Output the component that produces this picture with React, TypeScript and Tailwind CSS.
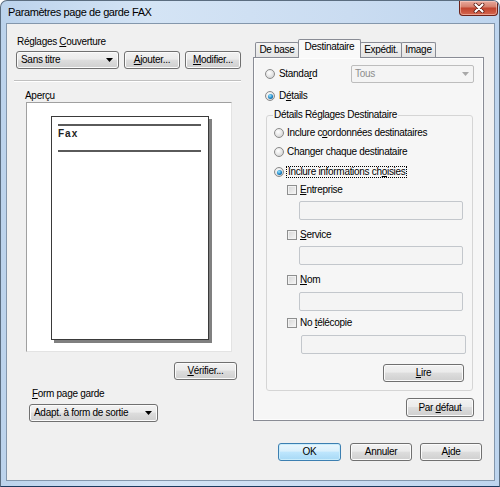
import React from "react";

const BTN =
  "flex items-center justify-center rounded-[3px] border border-[#707070] bg-[linear-gradient(#f2f2f2,#ebebeb_45%,#dddddd_50%,#cfcfcf)] shadow-[inset_0_0_0_1px_#fbfbfb]";

function U({ children }: { children: React.ReactNode }) {
  return <span className="underline underline-offset-[1px] decoration-[1px]">{children}</span>;
}

function Btn({ children, className = "" }: { children: React.ReactNode; className?: string }) {
  return <div className={`${BTN} ${className}`}>{children}</div>;
}

function Arrow({ color = "#000" }: { color?: string }) {
  return (
    <svg width="7" height="4" viewBox="0 0 7 4">
      <path d="M0 0H7L3.5 4Z" fill={color} />
    </svg>
  );
}

function Combo({ children, className = "" }: { children: React.ReactNode; className?: string }) {
  return (
    <div
      className={`flex items-center justify-between h-[18px] pl-[4px] pr-[5px] rounded-[3px] border border-[#707070] bg-[linear-gradient(#f2f2f2,#ebebeb_45%,#dddddd_50%,#cfcfcf)] shadow-[inset_0_0_0_1px_#fbfbfb] ${className}`}
    >
      <span>{children}</span>
      <Arrow />
    </div>
  );
}

function Radio({ checked = false }: { checked?: boolean }) {
  return (
    <span className="w-[10px] h-[10px] shrink-0 rounded-full border border-[#8a8a8a] bg-[radial-gradient(circle_at_40%_35%,#ffffff,#e6e6e6_50%,#c8c8c8)] flex items-center justify-center">
      {checked && (
        <span className="w-[5px] h-[5px] rounded-full bg-[radial-gradient(circle_at_40%_35%,#9fe6ff,#1b86c8_55%,#0d3d66)]" />
      )}
    </span>
  );
}

function Check() {
  return (
    <span className="w-[10px] h-[10px] shrink-0 border border-[#8e8f8f] bg-[linear-gradient(135deg,#d6d6d6,#f6f6f6)] shadow-[inset_0_0_0_1px_#f2f2f2]" />
  );
}

function Input({ className = "" }: { className?: string }) {
  return <div className={`h-[19px] rounded-[2px] border border-[#c3c7cc] bg-[#f4f4f4] ${className}`} />;
}

function Tab({ children, className = "" }: { children: React.ReactNode; className?: string }) {
  return (
    <div
      className={`h-[15px] flex items-center justify-center border border-b-0 border-[#898c95] rounded-t-[2px] bg-[linear-gradient(#f4f4f4,#e4e4e4)] ${className}`}
    >
      {children}
    </div>
  );
}

export default function App() {
  return (
    <div className="w-[500px] h-[487px] flex flex-col border border-[#5b6d80] border-b-[#1c3a5e] rounded-t-[7px] bg-[linear-gradient(90deg,#bcd3ec,#d4e4f5_30%,#cadcf1_70%,#bed5ee)] font-['Liberation_Sans',Arial,sans-serif] text-black overflow-hidden">
      {/* Title bar */}
      <div className="h-[22px] flex items-start shrink-0">
        <div className="pl-[7px] pt-[5px] text-[11px] tracking-[-0.4px] leading-[13px]">
          Paramètres page de garde FAX
        </div>
        <div className="ml-auto mr-[1px] w-[39px] h-[15px] flex items-center justify-center border border-t-0 border-[#6d2219] rounded-b-[4px] bg-[linear-gradient(#e9aa9d,#d6826f_40%,#c1452f_52%,#d5674f)] shadow-[inset_0_0_0_1px_rgba(255,220,210,0.5)]">
          <svg width="12" height="10" viewBox="0 0 12 10">
            <path d="M2.5 1.5L9.5 8.5M9.5 1.5L2.5 8.5" stroke="#5b1a12" strokeWidth="3.8" strokeLinecap="round" />
            <path d="M2.5 1.5L9.5 8.5M9.5 1.5L2.5 8.5" stroke="#ffffff" strokeWidth="2.2" strokeLinecap="round" />
          </svg>
        </div>
      </div>

      {/* Client area */}
      <div className="ml-[5px] w-[489px] h-[458px] shrink-0 border border-[#8497ac] bg-[#f0f0f0] flex flex-col text-[10px] tracking-[-0.3px] leading-[12px]">
        <div className="h-[398px] flex">
          {/* Left column */}
          <div className="w-[246px] flex flex-col">
            <div className="mt-[12px] ml-[10px] h-[12px]">
              Réglages <U>C</U>ouverture
            </div>
            <div className="mt-[3px] ml-[9px] flex gap-[5px]">
              <Combo className="w-[103px]">Sans titre</Combo>
              <Btn className="w-[56px] h-[18px]">
                <span>
                  <U>A</U>jouter...
                </span>
              </Btn>
              <Btn className="w-[56px] h-[18px]">
                <span>
                  <U>M</U>odifier...
                </span>
              </Btn>
            </div>
            <div className="mt-[11px] ml-[7px] w-[227px] h-[2px] border-t border-t-[#c0c0c0] border-b border-b-white" />
            <div className="mt-[8px] ml-[18px] h-[12px]">Aperçu</div>
            <div className="ml-[19px] w-[206px] h-[250px] border border-t-[#a0a0a0] border-l-[#a0a0a0] border-r-[#e3e3e3] border-b-[#e3e3e3] bg-white pl-[24px] pt-[13px]">
              <div className="w-[158px] h-[224px] border border-[#3a3a3a] bg-white shadow-[3px_3px_0_#808080] flex flex-col pl-[6px]">
                <div className="mt-[7px] w-[143px] h-[2px] bg-[#5a5a5a]" />
                <div className="mt-[2px] h-[11px] text-[10px] font-bold tracking-[1px] leading-[11px] text-[#222]">
                  Fax
                </div>
                <div className="mt-[11px] w-[143px] h-[2px] bg-[#5a5a5a]" />
              </div>
            </div>
            <Btn className="mt-[10px] ml-[167px] w-[63px] h-[18px]">
              <span>
                <U>V</U>érifier...
              </span>
            </Btn>
            <div className="mt-[8px] ml-[25px] h-[12px]">
              <U>F</U>orm page garde
            </div>
            <Combo className="mt-[4px] ml-[22px] w-[129px]">Adapt. à form de sortie</Combo>
          </div>

          {/* Right column */}
          <div className="w-[231px] flex flex-col">
            <div className="mt-[15px] h-[18px] flex items-end pl-[2px]">
              <Tab className="w-[44px]">De base</Tab>
              <div className="relative z-10 -ml-[1px] -mb-[1px] w-[63px] h-[19px] flex justify-center pt-[1px] border border-b-0 border-[#898c95] rounded-t-[2px] bg-[#f9f9f9]">
                Destinataire
              </div>
              <Tab className="-ml-[1px] w-[42px]">Expédit.</Tab>
              <Tab className="-ml-[1px] w-[35px]">Image</Tab>
            </div>
            <div className="h-[364px] border border-[#898c95] bg-[#f6f6f6] shadow-[inset_0_0_0_1px_#fdfdfd] flex flex-col">
              <div className="mt-[7px] h-[18px] flex items-center pl-[11px] pr-[9px]">
                <Radio />
                <span className="ml-[4px]">
                  Standa<U>r</U>d
                </span>
                <div className="ml-auto w-[123px] h-[18px] border border-[#bdbdbd] rounded-[2px] bg-[#f4f4f4] flex items-center justify-between pl-[3px] pr-[4px] text-[#8d8d8d]">
                  <span>Tous</span>
                  <Arrow color="#a8a8a8" />
                </div>
              </div>
              <div className="mt-[4px] h-[18px] flex items-center pl-[11px]">
                <Radio checked />
                <span className="ml-[4px]">
                  D<U>é</U>tails
                </span>
              </div>
              <fieldset className="mt-[4px] ml-[12px] w-[207px] h-[282px] border border-[#d5d5d5] rounded-[3px]">
                <legend className="ml-[6px] px-[1px] h-[12px] leading-[12px]">Détails Réglages Destinataire</legend>
                <div className="flex flex-col">
                  <div className="mt-[5px] h-[14px] flex items-center pl-[7px]">
                    <Radio />
                    <span className="ml-[3px]">
                      Inclure c<U>o</U>ordonnées destinataires
                    </span>
                  </div>
                  <div className="mt-[5px] h-[14px] flex items-center pl-[7px]">
                    <Radio />
                    <span className="ml-[3px]">
                      Chan<U>g</U>er chaque destinataire
                    </span>
                  </div>
                  <div className="mt-[6px] h-[14px] flex items-center pl-[7px]">
                    <Radio checked />
                    <span className="ml-[2px] px-[1px] h-[12px] border border-dotted border-black leading-[10px]">
                      Inclure informations ch<U>o</U>isies
                    </span>
                  </div>
                  <div className="mt-[4px] h-[14px] flex items-center pl-[20px]">
                    <Check />
                    <span className="ml-[3px]">
                      <U>E</U>ntreprise
                    </span>
                  </div>
                  <Input className="mt-[4px] ml-[32px] w-[164px]" />
                  <div className="mt-[8px] h-[14px] flex items-center pl-[20px]">
                    <Check />
                    <span className="ml-[3px]">
                      <U>S</U>ervice
                    </span>
                  </div>
                  <Input className="mt-[4px] ml-[32px] w-[164px]" />
                  <div className="mt-[8px] h-[14px] flex items-center pl-[20px]">
                    <Check />
                    <span className="ml-[3px]">
                      <U>N</U>om
                    </span>
                  </div>
                  <Input className="mt-[5px] ml-[32px] w-[164px]" />
                  <div className="mt-[5px] h-[14px] flex items-center pl-[20px]">
                    <Check />
                    <span className="ml-[3px]">
                      No <U>t</U>élécopie
                    </span>
                  </div>
                  <Input className="mt-[5px] ml-[34px] w-[165px]" />
                  <Btn className="mt-[10px] ml-[116px] w-[81px] h-[18px]">
                    <span>
                      <U>L</U>ire
                    </span>
                  </Btn>
                </div>
              </fieldset>
              <Btn className="mt-[7px] ml-[152px] w-[68px] h-[19px]">
                <span>
                  Par <U>d</U>éfaut
                </span>
              </Btn>
            </div>
          </div>
        </div>

        {/* Bottom buttons */}
        <div className="mt-[21px] flex pl-[271px]">
          <div className="w-[63px] h-[18px] flex items-center justify-center rounded-[3px] border border-[#3c7fb1] bg-[linear-gradient(#eaf6fd,#d9f0fc_45%,#bee6fd_50%,#a7d9f5)] shadow-[inset_0_0_0_1px_#c9ecfb]">
            OK
          </div>
          <Btn className="ml-[9px] w-[62px] h-[18px]">Annuler</Btn>
          <Btn className="ml-[8px] w-[62px] h-[18px]">
            <span>
              A<U>i</U>de
            </span>
          </Btn>
        </div>
      </div>
    </div>
  );
}
